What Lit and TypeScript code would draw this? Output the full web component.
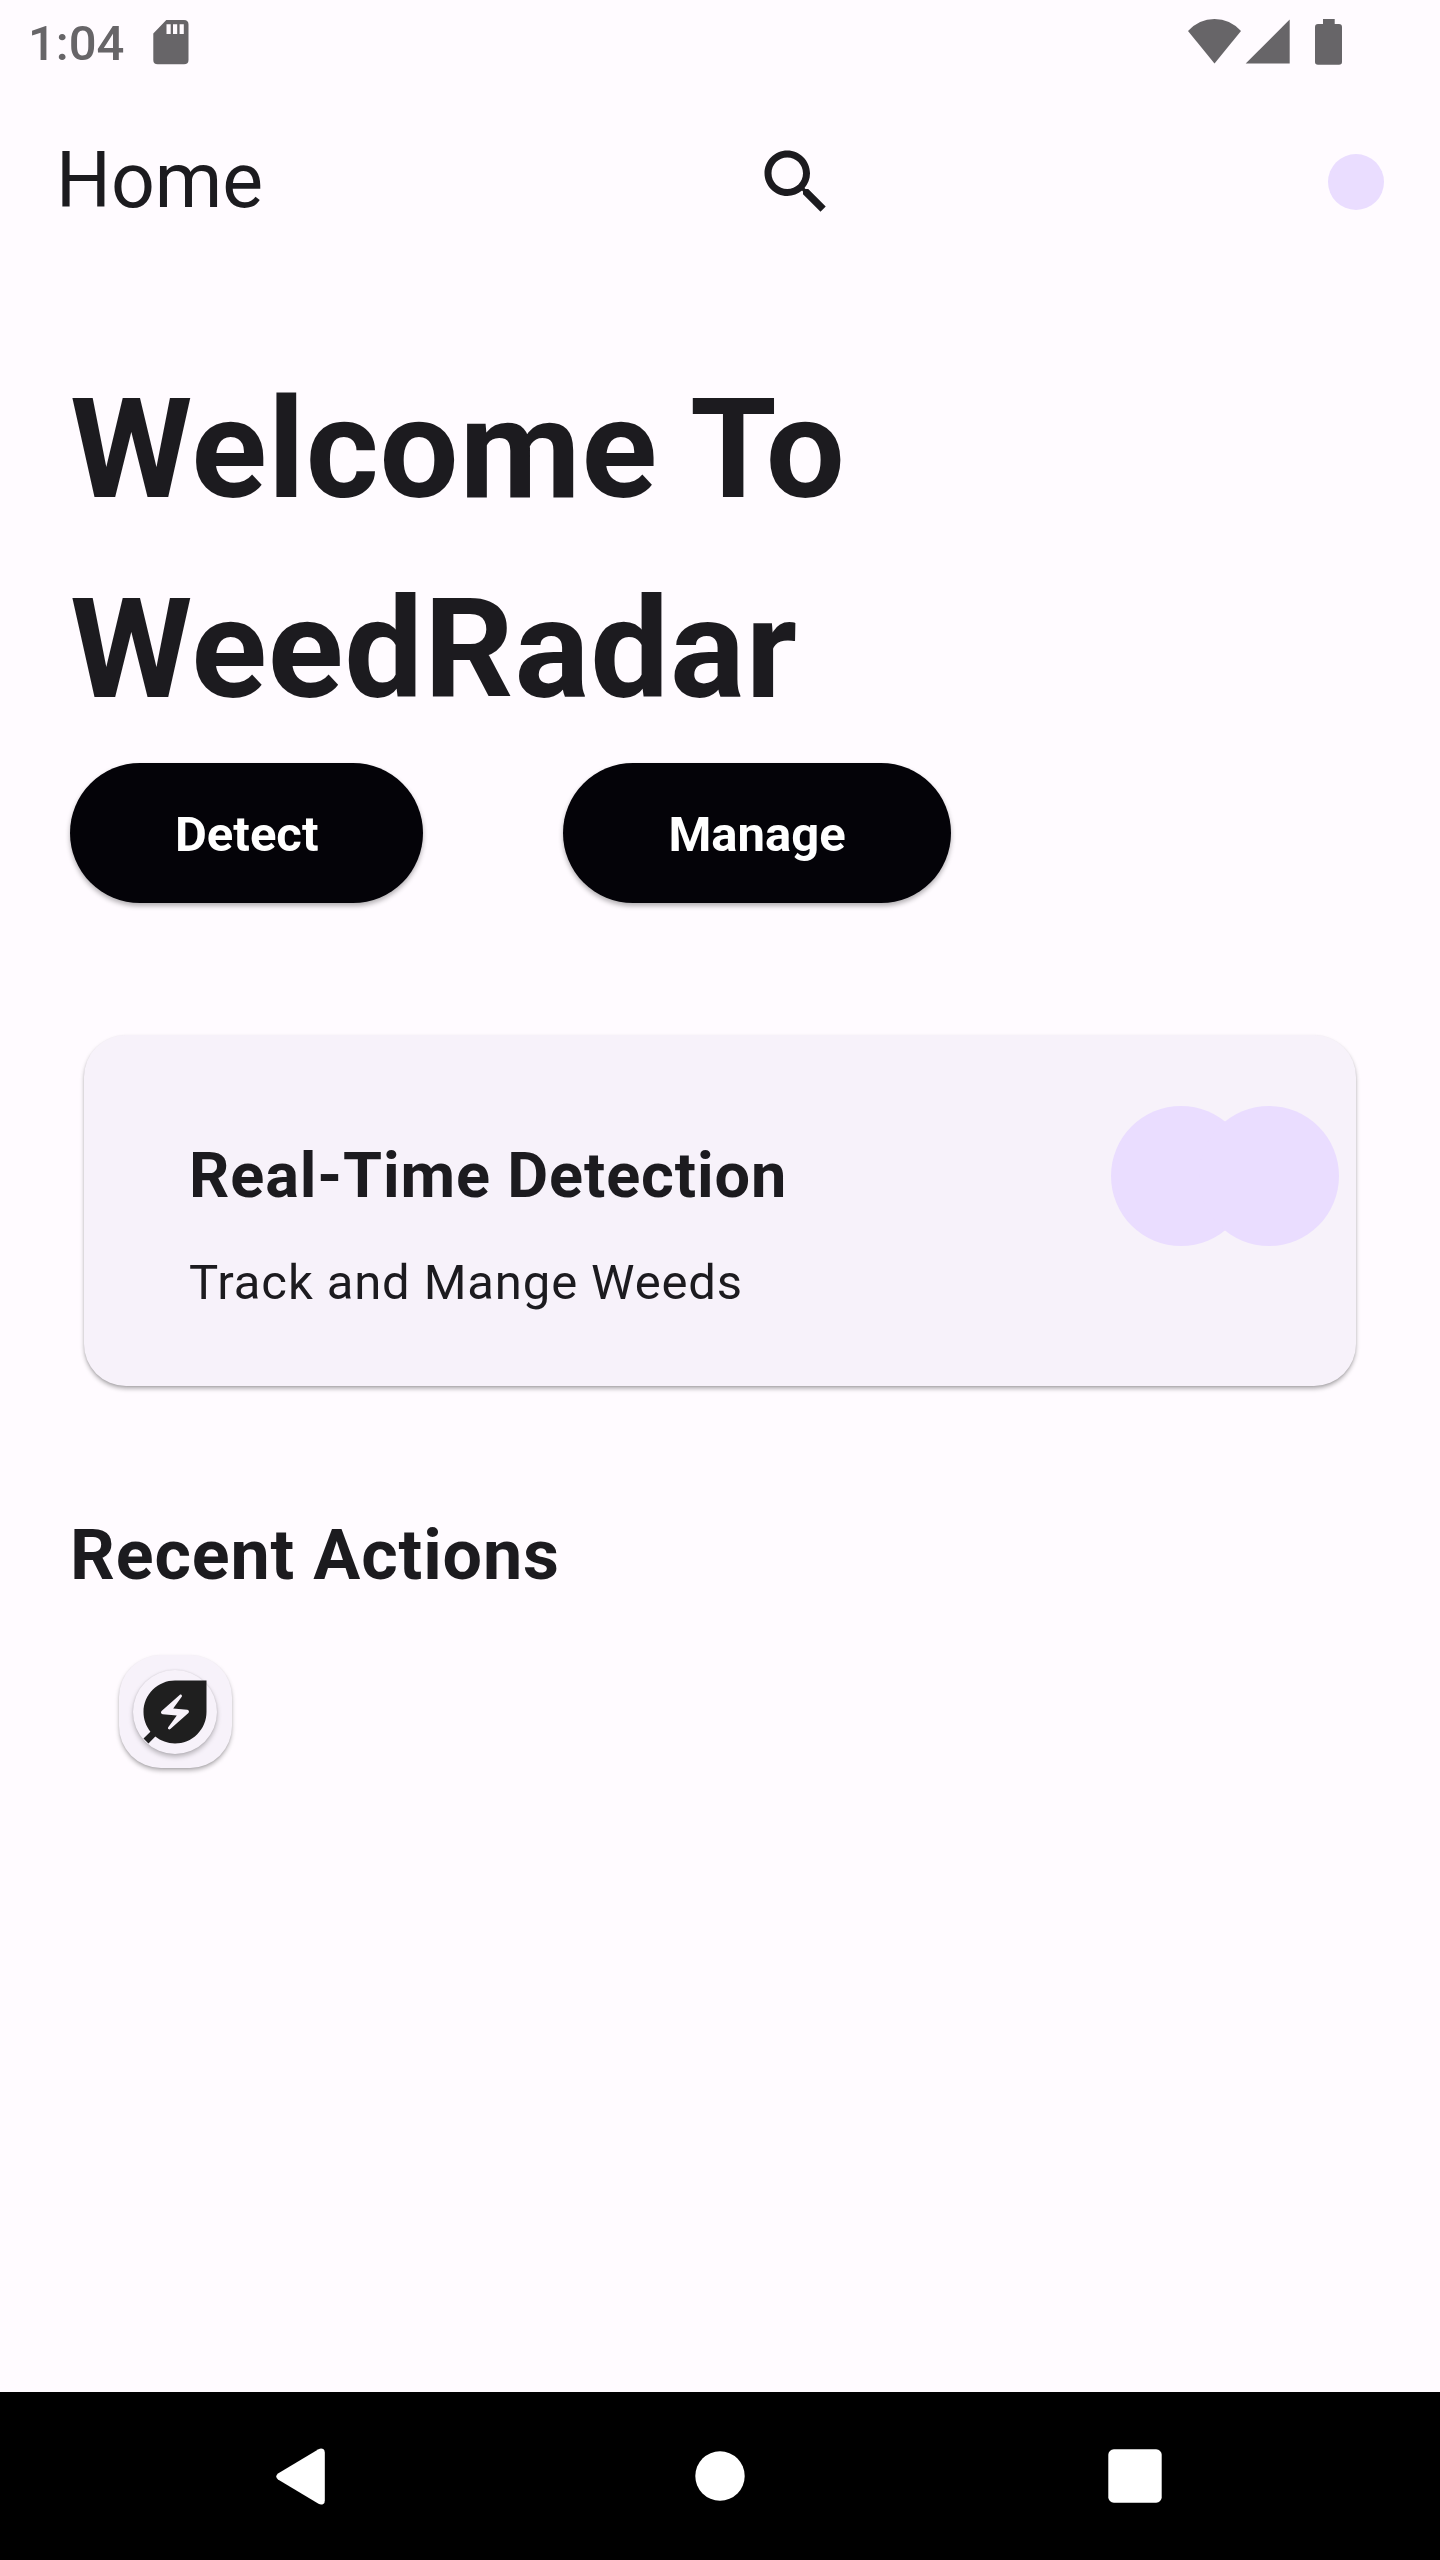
import { LitElement, html, css, svg } from "lit";
import { customElement } from "lit/decorators.js";

const sdCard = svg`<path d="M13.300 0H31Q35.500 0 35.500 4.500V40Q35.500 44.300 31 44.300H4.700Q.300 44.300 .300 40V13.500ZM13.500 4.200V14H17.700V4.200ZM20 4.200V14H24.200V4.200ZM26.600 4.200V14H30.800V4.200Z" fill-rule="evenodd"/>`;

@customElement("app-root")
export class AppRoot extends LitElement {
  static styles = css`
    :host {
      display: flex;
      flex-direction: column;
      width: 1440px;
      height: 2560px;
      background: #fffbff;
      color: #1c1b1f;
      font-family: Roboto, "Noto Sans", sans-serif;
      overflow: hidden;
    }
    * { box-sizing: border-box; }
    svg { display: block; flex: none; }
    h1, h2, h3, p { margin: 0; }
    .status {
      display: flex;
      height: 84px;
      padding: 0 97px 0 28px;
      color: #676568;
      fill: #676568;
    }
    .clock {
      font-size: 49px;
      font-weight: 500;
      line-height: 88px;
      width: 124.500px;
    }
    .sd { margin-top: 20px; }
    .signals {
      display: flex;
      margin-left: auto;
      padding-top: 19px;
    }
    .cell { margin-left: 4px; }
    .battery { margin-left: 25px; }
    .topbar {
      display: flex;
      align-items: center;
      justify-content: space-between;
      height: 196px;
      padding: 0 56px;
    }
    .title {
      font-size: 77px;
      line-height: 98px;
      padding-bottom: 2px;
    }
    .dot {
      width: 56px;
      height: 56px;
      border-radius: 50%;
      background: #eaddff;
    }
    main {
      flex: 1;
      padding: 69px 70px 0;
    }
    .welcome {
      font-size: 140px;
      line-height: 200px;
      font-weight: 700;
      letter-spacing: 0.875px;
    }
    .actions {
      display: flex;
      gap: 140px;
      padding-top: 14px;
    }
    .pill {
      height: 140px;
      padding: 3px 105px 0;
      border: 0;
      border-radius: 70px;
      background: #040308;
      color: #fff;
      font: 700 49px/137px Roboto, sans-serif;
      box-shadow: 0 3px 5px rgba(0, 0, 0, 0.3);
    }
    .card {
      display: flex;
      justify-content: space-between;
      height: 351px;
      margin: 132px 14px 0;
      padding: 71px 17.500px 0 105px;
      border-radius: 42px;
      background: #f7f2fa;
      box-shadow: 0 3px 4px rgba(0, 0, 0, 0.27), 0 1px 2px rgba(0, 0, 0, 0.1);
    }
    .card-title {
      padding-top: 28px;
      font-size: 63px;
      line-height: 84px;
      font-weight: 700;
      letter-spacing: 0.875px;
    }
    .card-text {
      padding-top: 30px;
      font-size: 49px;
      line-height: 70px;
      letter-spacing: 0.875px;
    }
    .bubbles { display: flex; }
    .bubble {
      width: 140px;
      height: 140px;
      border-radius: 50%;
      background: #eaddff;
    }
    .bubble + .bubble { margin-left: -52.5px; }
    .recent {
      padding-top: 127px;
      font-size: 70px;
      line-height: 84px;
      font-weight: 700;
      letter-spacing: 0.875px;
    }
    .tile {
      display: flex;
      align-items: center;
      justify-content: center;
      width: 113px;
      height: 113px;
      margin: 58px 0 0 48.500px;
      border-radius: 42px;
      background: #f7f2fa;
      box-shadow: 0 3px 4px rgba(0, 0, 0, 0.25), 0 1px 2px rgba(0, 0, 0, 0.1);
    }
    .badge {
      width: 84px;
      height: 84px;
      border-radius: 50%;
      overflow: visible;
      background: #f7f2fa;
      fill: #1f1f1f;
      box-shadow: 0 3px 5px rgba(0, 0, 0, 0.25), 0 0 2px rgba(0, 0, 0, 0.12);
    }
    .nav {
      display: flex;
      align-items: center;
      height: 168px;
      background: #000;
      fill: #fff;
      padding-left: 276px;
    }
    .home { margin-left: 370px; }
    .overview { margin-left: 363px; }
  `;

  render() {
    return html`
      <div class="status">
        <span class="clock">1:04</span>
        <svg class="sd" width="36" height="45" viewBox="0 0 36 45">${sdCard}</svg>
        <div class="signals">
          <svg width="53" height="45" viewBox="0 0 53 45"><path d="M0 12Q11 0 26.500 0T53 12L26.500 44.500Z" /></svg>
          <svg class="cell" width="45" height="45" viewBox="0 0 45 45"><path d="M44.700 .5V44.500H.7Z" /></svg>
          <svg class="battery" width="28" height="46" viewBox="0 0 28 46"><path d="M8 0H19.700V5H24Q27 5 27 8V43Q27 45.700 24 45.700H3Q0 45.700 0 43V8Q0 5 3 5H8Z" /></svg>
        </div>
      </div>
      <header class="topbar">
        <span class="title">Home</span>
        <svg width="84" height="84" viewBox="0 0 24 24" fill="#1c1b1f">
          <path d="M15.500 14h-.79l-.28-.27C15.410 12.590 16 11.110 16 9.500 16 5.910 13.090 3 9.500 3S3 5.910 3 9.500 5.910 16 9.500 16c1.610 0 3.090-.59 4.230-1.570l.27.28v.79l5 4.990L20.490 19l-4.990-5zm-6 0C7.010 14 5 11.990 5 9.500S7.010 5 9.500 5 14 7.010 14 9.500 11.990 14 9.500 14z" />
        </svg>
        <div class="dot"></div>
      </header>
      <main>
        <h1 class="welcome">Welcome To<br />WeedRadar</h1>
        <div class="actions">
          <button class="pill">Detect</button>
          <button class="pill">Manage</button>
        </div>
        <section class="card">
          <div>
            <h3 class="card-title">Real-Time Detection</h3>
            <p class="card-text">Track and Mange Weeds</p>
          </div>
          <div class="bubbles"><div class="bubble"></div><div class="bubble"></div></div>
        </section>
        <h2 class="recent">Recent Actions</h2>
        <div class="tile">
          <svg class="badge" viewBox="0 0 24 24">
            <path d="M12,3c-4.8,0-9,3.860-9,9c0,2.120,0.740,4.070,1.970,5.610L3,19.590L4.410,21l1.970-1.970C7.930,20.260,9.880,21,12,21c2.300,0,4.610-0.880,6.360-2.640C20.120,16.610,21,14.300,21,12V3H12z M15.830,12.260l-5.160,4.630c-0.160,0.150-0.410,0.140-0.560-0.010c-0.140-0.140-0.160-0.360-0.040-0.520l2.440-3.330l-4.050-0.400c-0.440-0.040-0.630-0.590-0.300-0.890l5.160-4.630c0.160-0.150,0.410-0.140,0.560,0.010c0.140,0.140,0.160,0.360,0.040,0.520l-2.440,3.330l4.050,0.400C15.980,11.410,16.160,11.960,15.830,12.260z" />
          </svg>
        </div>
      </main>
      <nav class="nav">
        <svg width="49" height="57" viewBox="0 0 49 57"><path d="M42.500 1.200Q45 -.3 47.300 1Q48.800 2 48.800 4.500V52.500Q48.800 55 47.300 56Q45 57.300 42.500 55.800L2 31.500Q-1.500 28.500 2 25.500Z" /></svg>
        <svg class="home" width="50" height="50" viewBox="0 0 50 50"><circle cx="25" cy="25" r="24.700" /></svg>
        <svg class="overview" width="54" height="54" viewBox="0 0 54 54"><rect x=".3" y=".3" width="53.400" height="53.400" rx="5.500" /></svg>
      </nav>
    `;
  }
}
